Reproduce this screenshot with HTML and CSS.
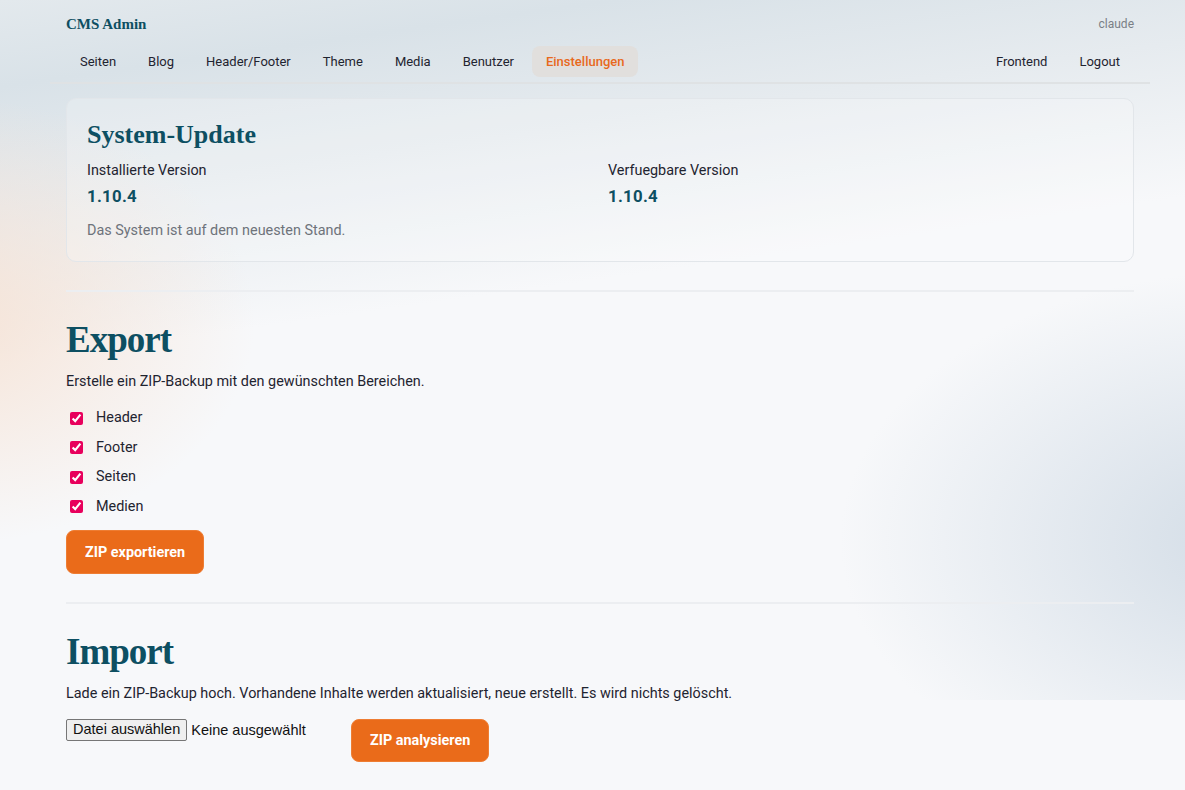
FILE: index.html
```html
<!DOCTYPE html>
<html lang="de">
<head>
    <meta charset="UTF-8">
    <meta name="viewport" content="width=device-width, initial-scale=1.0">
    <title>Einstellungen - CMS Admin</title>
    <link rel="stylesheet" href="styles.css">
</head>
<body>
    <header class="topbar">
        <div class="brand-row">
            <span class="brand">CMS Admin</span>
            <span class="user">claude</span>
        </div>
        <nav class="nav">
            <div class="nav-main">
                <a href="#">Seiten</a>
                <a href="#">Blog</a>
                <a href="#">Header/Footer</a>
                <a href="#">Theme</a>
                <a href="#">Media</a>
                <a href="#">Benutzer</a>
                <a href="#" class="active">Einstellungen</a>
            </div>
            <div class="nav-side">
                <a href="#">Frontend</a>
                <a href="#">Logout</a>
            </div>
        </nav>
    </header>

    <main class="content">
        <section class="card">
            <h2>System-Update</h2>
            <div class="versions">
                <div>
                    <div class="label">Installierte Version</div>
                    <div class="value">1.10.4</div>
                </div>
                <div>
                    <div class="label">Verfuegbare Version</div>
                    <div class="value">1.10.4</div>
                </div>
            </div>
            <p class="note">Das System ist auf dem neuesten Stand.</p>
        </section>

        <hr>

        <section class="block">
            <h1>Export</h1>
            <p>Erstelle ein ZIP-Backup mit den gewünschten Bereichen.</p>
            <div class="checks">
                <label><input type="checkbox" checked> Header</label>
                <label><input type="checkbox" checked> Footer</label>
                <label><input type="checkbox" checked> Seiten</label>
                <label><input type="checkbox" checked> Medien</label>
            </div>
            <button class="btn">ZIP exportieren</button>
        </section>

        <hr>

        <section class="block">
            <h1>Import</h1>
            <p>Lade ein ZIP-Backup hoch. Vorhandene Inhalte werden aktualisiert, neue erstellt. Es wird nichts gelöscht.</p>
            <div class="upload">
                <label class="file-picker">
                    <input type="file" accept=".zip">
                    <span class="file-btn">Datei auswählen</span>
                    <span class="file-name">Keine ausgewählt</span>
                </label>
                <button class="btn">ZIP analysieren</button>
            </div>
        </section>
    </main>
</body>
</html>
```

FILE: styles.css
```css
html {
    background: #f7f8fa;
}
body {
    margin: 0;
    padding-left: 15px;
    font-family: Roboto, "Noto Sans", sans-serif;
    font-size: 14.4px;
    color: #1f2430;
    background:
        radial-gradient(ellipse 420px 300px at -60px 320px, rgba(246, 226, 212, 0.95), rgba(246, 226, 212, 0) 75%),
        radial-gradient(ellipse 560px 360px at 1260px 540px, rgba(210, 220, 230, 1), rgba(210, 220, 230, 0) 75%),
        linear-gradient(172deg, #e3e9ed 0%, #d9e2e8 10%, #e6ebef 24%, rgba(247, 248, 250, 0) 42%);
    background-size: 100% 700px;
    background-repeat: no-repeat;
}
a {
    color: inherit;
    text-decoration: none;
}
.topbar {
    width: 1100px;
    margin: 0 auto;
    box-sizing: border-box;
    padding: 14px 16px 5px;
    border-bottom: 2px solid #dfe2e4;
}
.brand-row {
    display: flex;
    justify-content: space-between;
    align-items: center;
    height: 20px;
    margin-bottom: 12px;
}
.brand {
    font-family: "Liberation Serif", serif;
    font-weight: bold;
    font-size: 15px;
    color: #0d4f62;
}
.user {
    font-size: 12px;
    color: #7a7f86;
}
.nav {
    display: flex;
    justify-content: space-between;
}
.nav-main, .nav-side {
    display: flex;
    gap: 4px;
}
.nav a {
    font-size: 13px;
    line-height: 17px;
    padding: 7px 14px;
    border-radius: 8px;
    color: #1f2430;
}
.nav a.active {
    background: #e1dfdd;
    color: #e8691c;
    font-weight: 500;
}
.content {
    width: 1068px;
    margin: 14px auto 0;
}
.card {
    border: 1px solid #e2e6ea;
    border-radius: 10px;
    padding: 20px;
    background: rgba(255, 255, 255, 0.22);
}
.card h2 {
    margin: 0 0 11px;
    font-family: "Liberation Serif", serif;
    font-size: 26px;
    line-height: 31px;
    color: #0d4f62;
}
.versions {
    display: grid;
    grid-template-columns: 1fr 1fr;
    gap: 16px;
}
.label {
    line-height: 20px;
}
.value {
    margin-top: 4px;
    font-size: 16.8px;
    font-weight: bold;
    line-height: 22px;
    color: #0d4f62;
    letter-spacing: 0.3px;
}
.note {
    margin: 14px 0 0;
    line-height: 20px;
    color: #6e737b;
}
hr {
    border: 0;
    border-top: 2px solid #eceef1;
    margin: 28px 0 0;
}
.block h1 {
    margin: 26px 0 10px;
    font-family: "Liberation Serif", serif;
    font-size: 37px;
    line-height: 44px;
    letter-spacing: -1px;
    color: #0d4f62;
}
.block p {
    margin: 0;
    line-height: 20px;
}
.checks {
    display: flex;
    flex-direction: column;
    gap: 9.5px;
    margin: 16px 0 13.5px;
}
.checks label {
    display: flex;
    align-items: center;
    line-height: 20px;
}
.checks input {
    width: 13px;
    height: 13px;
    margin: 0 13px 0 4px;
    accent-color: #e8005c;
}
.btn {
    height: 44px;
    padding: 0 18px;
    border: 1px solid #ee7d33;
    border-radius: 8px;
    background: #ea6b1a;
    color: #fff;
    font-family: Roboto, sans-serif;
    font-size: 14.4px;
    font-weight: bold;
}
.upload {
    display: flex;
    align-items: flex-start;
    margin-top: 15px;
}
.upload .btn {
    height: 43px;
}
.file-picker {
    display: flex;
    align-items: center;
    width: 285px;
    font-family: "Liberation Sans", Arial, sans-serif;
    font-size: 14.5px;
    color: #111;
}
.file-picker input {
    display: none;
}
.file-btn {
    height: 22px;
    box-sizing: border-box;
    line-height: 19px;
    padding: 0 6px;
    border: 1px solid #767676;
    border-radius: 2px;
    background: #efefef;
    margin-right: 4px;
}
```
